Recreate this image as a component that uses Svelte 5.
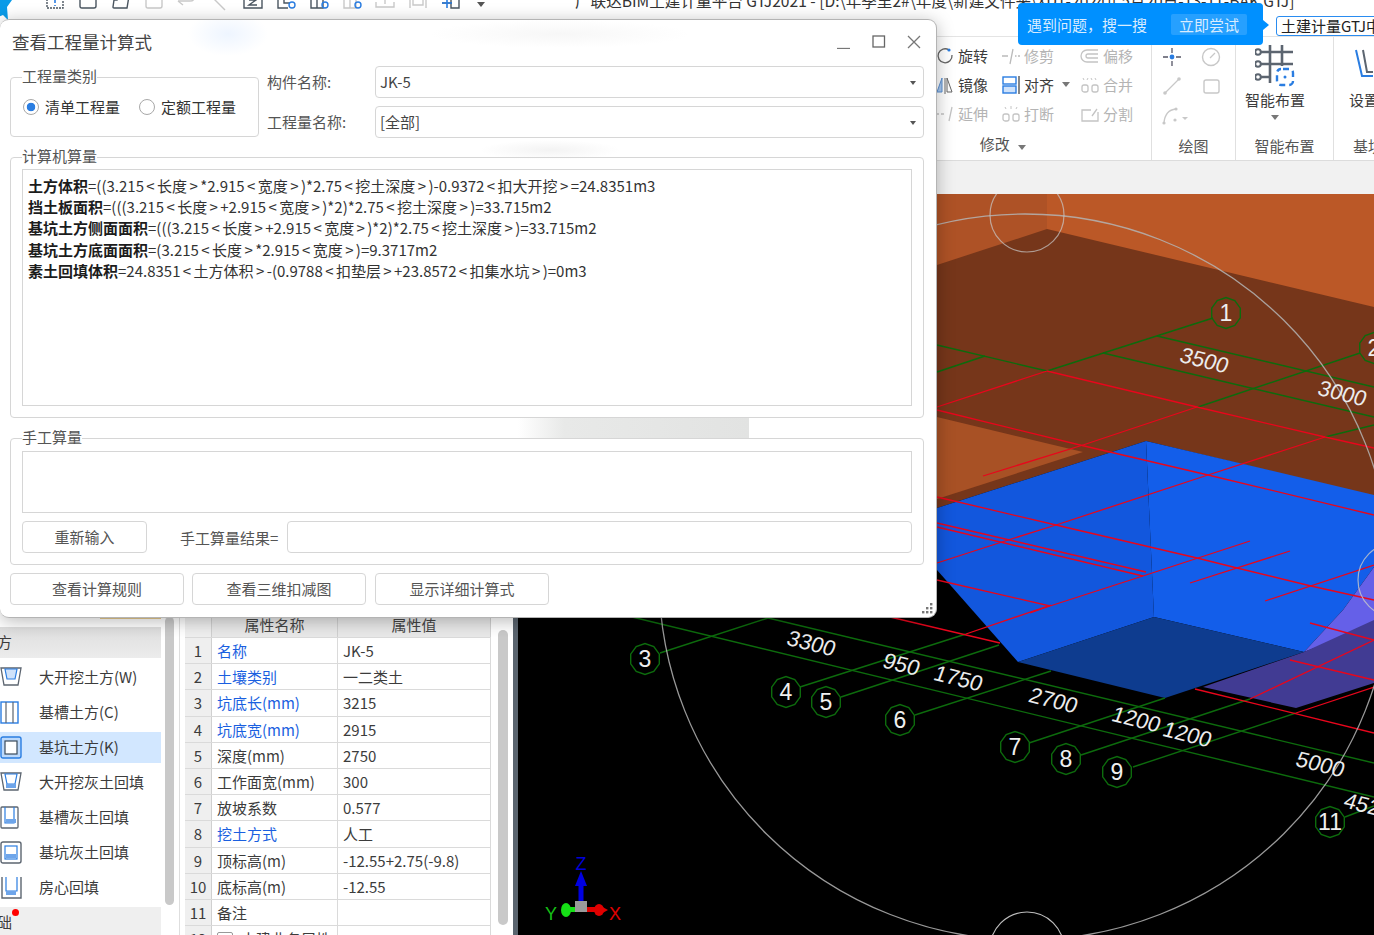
<script>
	const quick = [
		{ c: '#4a5560', d: 'M2 -4h16v12h-16z', dash: true, extra: 'M10 -2v5M10 5v1' },
		{ c: '#4a5560', d: 'M2 -4h16v10q0 2-2 2h-12q-2 0-2-2z' },
		{ c: '#4a5560', d: 'M6 -4h12l-2 12h-13q-1 0-1-1l1-7h3z' },
		{ c: '#c9c9c9', d: 'M2 -4h16v10q0 2-2 2h-12q-2 0-2-2z' },
		{ c: '#c9c9c9', d: 'M1 1h12q5 0 4-5M1 1l5 4' },
		{ c: '#c9c9c9', d: 'M3 -2l12 12' },
		{ c: '#4a5560', d: 'M1 -4h18v12h-18zM6 0h7l-7 5h8' },
		{ c: '#4a5560', d: 'M2 -4v12h10M8 -4v7h6', blue: true },
		{ c: '#4a5560', d: 'M2 -4h12v12h-12zM8 -4v12', blue: true },
		{ c: '#c9c9c9', d: 'M2 -4h12v12h-12zM8 -4v12', blue: true },
		{ c: '#c9c9c9', d: 'M1 2v5h18v-5M10 4v-8' },
		{ c: '#c9c9c9', d: 'M2 -4v12M18 -4v12M5 -4h10v9h-10z' },
		{ c: '#4a5560', d: 'M10 -4v12h8v-12M1 3h10', plus: true }
	];

	const listItems = [
		{ name: '大开挖土方(W)', kind: 'w' },
		{ name: '基槽土方(C)', kind: 'c' },
		{ name: '基坑土方(K)', kind: 'k', active: true },
		{ name: '大开挖灰土回填', kind: 'w', fill: true },
		{ name: '基槽灰土回填', kind: 'c2', fill: true },
		{ name: '基坑灰土回填', kind: 'k', fill: true },
		{ name: '房心回填', kind: 'u', fill: true }
	];

	const props = [
		['名称', 'JK-5', true],
		['土壤类别', '一二类土', true],
		['坑底长(mm)', '3215', true],
		['坑底宽(mm)', '2915', true],
		['深度(mm)', '2750', false],
		['工作面宽(mm)', '300', false],
		['放坡系数', '0.577', false],
		['挖土方式', '人工', true],
		['顶标高(m)', '-12.55+2.75(-9.8)', false],
		['底标高(m)', '-12.55', false],
		['备注', '', false]
	];

	const formulas = [
		['土方体积', '=((3.215<长度>*2.915<宽度>)*2.75<挖土深度>)-0.9372<扣大开挖>=24.8351m3'],
		['挡土板面积', '=(((3.215<长度>+2.915<宽度>)*2)*2.75<挖土深度>)=33.715m2'],
		['基坑土方侧面面积', '=(((3.215<长度>+2.915<宽度>)*2)*2.75<挖土深度>)=33.715m2'],
		['基坑土方底面面积', '=(3.215<长度>*2.915<宽度>)=9.3717m2'],
		['素土回填体积', '=24.8351<土方体积>-(0.9788<扣垫层>+23.8572<扣集水坑>)=0m3']
	];

	// axis bubbles on the 3d canvas
	const bubbles = [
		{ t: '1', x: 1226, y: 313 },
		{ t: '2', x: 1374, y: 348 },
		{ t: '3', x: 645, y: 659 },
		{ t: '4', x: 786, y: 692 },
		{ t: '5', x: 826, y: 702 },
		{ t: '6', x: 900, y: 720 },
		{ t: '7', x: 1015, y: 747 },
		{ t: '8', x: 1066, y: 759 },
		{ t: '9', x: 1117, y: 772 },
		{ t: '11', x: 1330, y: 822 }
	];

	const dims = [
		{ t: '3500', x: 1204, y: 362 },
		{ t: '3000', x: 1342, y: 395 },
		{ t: '3300', x: 811, y: 645 },
		{ t: '950', x: 901, y: 666 },
		{ t: '1750', x: 958, y: 680 },
		{ t: '2700', x: 1053, y: 702 },
		{ t: '1200', x: 1136, y: 721 },
		{ t: '1200', x: 1187, y: 736 },
		{ t: '5000', x: 1320, y: 766 },
		{ t: '452', x: 1362, y: 806 }
	];

	const greenLines = [
		'1213,318 1047,371',
		'1360,353 1198,407',
		'1374,425 1325,437',
		'937,345 1047,371',
		'937,372 985,356',
		'1157,336 1374,387',
		'1103,353 1374,417',
		'632,617 1374,797',
		'768,618 1374,763',
		'660,653 768,618',
		'800,687 966,634',
		'841,697 999,645',
		'915,715 1051,671',
		'1029,743 1165,698',
		'1081,755 1250,699',
		'1133,767 1296,713',
		'1345,817 1374,806'
	];

	const redLines = [
		'1047,371 1197,407 1325,437 1374,448',
		'937,407 1047,371',
		'937,410 1080,445 1208,475 1374,515',
		'1197,407 1083,445 983,476',
		'1325,437 1208,475 1056,525 1005,541 937,563',
		'937,497 1056,525 1197,558 1237,568 1311,586 1374,600',
		'937,523 1146,572',
		'937,527 1143,576',
		'1250,541 1146,575 1050,606 1030,613',
		'1290,551 1190,583',
		'1374,565 1265,601',
		'937,580 1050,606',
		'890,617 1000,643',
		'966,634 1051,605',
		'1195,689 1374,733',
		'1296,713 1374,687',
		'1250,699 1374,640',
		'1310,623 1374,640',
		'1290,660 1374,680'
	];

	function ring(x, y) {
		let pts = [];
		for (let i = 0; i < 10; i++) {
			const a = (Math.PI * 2 * i) / 10 + Math.PI / 10;
			pts.push((x + Math.cos(a) * 15).toFixed(1) + ',' + (y + Math.sin(a) * 15.5).toFixed(1));
		}
		return pts.join(' ');
	}

	// the angle brackets sit wider apart in the formulas
	function pieces(s) {
		return s.split(/([<>])/).filter(Boolean);
	}
</script>

<div class="app">
	<header class="topbar">
		<svg class="logo" width="12" height="22" viewBox="0 0 12 22"><path d="M-4 0h16l-5 7 1 13-5-5-7 3z" fill="#0a9be8" /></svg>
		<div class="quick">
			{#each quick as q}
				<svg width="20" height="10" viewBox="0 0 20 10">
					<path d={q.d} fill="none" stroke={q.c} stroke-width="1.4" stroke-dasharray={q.dash ? '2 1' : 'none'} />
					{#if q.extra}<path d={q.extra} stroke="#2a7de1" stroke-width="1.6" />{/if}
					{#if q.blue}<circle cx="16" cy="5" r="3" fill="none" stroke="#2a7de1" stroke-width="1.4" />{/if}
					{#if q.plus}<path d="M1 3h10M6 -2v10" stroke="#2a7de1" stroke-width="1.6" />{/if}
				</svg>
			{/each}
			<span class="qarrow"></span>
		</div>
		<div class="wintitle">广联达BIM土建计量平台 GTJ2021 - [D:\年季里2#\年度\新建文件夹\XD1-2024年5月20日-13-11-BAK.GTJ]</div>
		<div class="search">土建计量GTJ中</div>
	</header>

	<section class="ribbon">
		<div class="group modify">
			<div class="tools">
				<div class="tool">
					<svg viewBox="0 0 20 20"><path d="M14 4a7 7 0 1 0 3 5" fill="none" stroke="#666" stroke-width="1.3" /><circle cx="14" cy="4" r="1.6" fill="#2a7de1" /></svg>
					<span>旋转</span>
				</div>
				<div class="tool off">
					<svg viewBox="0 0 20 20"><path d="M1 10h6M14 10h1.5M17 10h2M12 3l-3 15" stroke="#bbb" stroke-width="1.3" fill="none" /></svg>
					<span>修剪</span>
				</div>
				<div class="tool off">
					<svg viewBox="0 0 20 20"><path d="M18 4h-11a6 6 0 0 0 0 12h11M18 8h-10a2 2 0 0 0 0 4h10" fill="none" stroke="#c4c4c4" stroke-width="1.3" /></svg>
					<span>偏移</span>
				</div>
				<div class="tool">
					<svg viewBox="0 0 20 20"><path d="M7 3l-5 14h5z" fill="#a6c8f0" stroke="#5b8fd0" /><path d="M10 3v16" stroke="#666" /><path d="M12 3l5 14h-5z" fill="none" stroke="#666" /></svg>
					<span>镜像</span>
				</div>
				<div class="tool">
					<svg viewBox="0 0 20 20"><rect x="2" y="2" width="13" height="7" fill="none" stroke="#2a7de1" stroke-width="1.4" /><rect x="2" y="11" width="13" height="7" fill="#cfe2fa" stroke="#2a7de1" stroke-width="1.4" /><path d="M18 1v18" stroke="#555" stroke-width="1.4" /></svg>
					<span>对齐</span>
					<i class="caret"></i>
				</div>
				<div class="tool off">
					<svg viewBox="0 0 20 20"><path d="M3 3l1 2M15 3l1 2M8 3l-1 2M11 3l1 2" stroke="#c4c4c4" /><rect x="2" y="10" width="6" height="7" rx="2" fill="none" stroke="#c4c4c4" stroke-width="1.3" /><rect x="12" y="10" width="6" height="7" rx="2" fill="none" stroke="#c4c4c4" stroke-width="1.3" /></svg>
					<span>合并</span>
				</div>
				<div class="tool off">
					<svg viewBox="0 0 20 20"><path d="M1 10h3M6 10h3M17 3l-3 14" stroke="#c4c4c4" stroke-width="1.3" /></svg>
					<span>延伸</span>
				</div>
				<div class="tool off">
					<svg viewBox="0 0 20 20"><path d="M4 3l1 2M16 3l-1 2M10 2v3" stroke="#c4c4c4" /><rect x="2" y="10" width="6" height="7" rx="2" fill="none" stroke="#c4c4c4" stroke-width="1.3" /><rect x="12" y="10" width="6" height="7" rx="2" fill="none" stroke="#c4c4c4" stroke-width="1.3" /></svg>
					<span>打断</span>
				</div>
				<div class="tool off">
					<svg viewBox="0 0 20 20"><path d="M18 8v9h-16v-11h9M12 12l5-7" fill="none" stroke="#c4c4c4" stroke-width="1.3" /></svg>
					<span>分割</span>
				</div>
			</div>
			<div class="grouplabel">修改 <i class="caret"></i></div>
		</div>

		<div class="group draw">
			<div class="drawgrid">
				<svg viewBox="0 0 20 20"><path d="M1 10h5M14 10h5M10 1v5M10 14v5" stroke="#556" stroke-width="1.3" /><circle cx="10" cy="10" r="2.4" fill="#2a7de1" /></svg>
				<svg viewBox="0 0 20 20"><circle cx="10" cy="10" r="8.5" fill="none" stroke="#c8c8c8" stroke-width="1.4" /><path d="M9 11l5-5" stroke="#c8c8c8" stroke-width="1.3" /></svg>
				<svg viewBox="0 0 20 20"><path d="M3 17l14-14" stroke="#c8c8c8" stroke-width="1.3" /><circle cx="3" cy="17" r="1.8" fill="#c8c8c8" /><circle cx="17" cy="3" r="1.8" fill="#c8c8c8" /></svg>
				<svg viewBox="0 0 20 20"><rect x="3" y="4" width="15" height="13" rx="2" fill="none" stroke="#c8c8c8" stroke-width="1.4" /></svg>
				<svg viewBox="0 0 20 20"><path d="M2 18q1-13 12-14" fill="none" stroke="#c8c8c8" stroke-width="1.3" /><circle cx="2" cy="18" r="1.6" fill="#c8c8c8" /><circle cx="14" cy="4" r="1.6" fill="#c8c8c8" /><circle cx="13" cy="15" r="1.6" fill="#c8c8c8" /><path d="M20 12h6l-3 3z" fill="#c8c8c8" /></svg>
			</div>
			<div class="grouplabel low">绘图</div>
		</div>

		<div class="group smart">
			<div class="bigbtn">
				<svg width="40" height="42" viewBox="0 0 40 42">
					<path d="M3 7h35M3 19h35M3 32h13M15 0v38M27 0v21" stroke="#5c6570" stroke-width="2.6" fill="none" />
					<circle cx="3" cy="7" r="2.8" fill="#fff" stroke="#5c6570" stroke-width="2" />
					<circle cx="3" cy="19" r="2.8" fill="#fff" stroke="#5c6570" stroke-width="2" />
					<circle cx="3" cy="32" r="2.8" fill="#fff" stroke="#5c6570" stroke-width="2" />
					<rect x="22" y="24" width="16" height="16" rx="4" fill="#fff" stroke="#2a7de1" stroke-width="2.4" stroke-dasharray="6 4" stroke-dashoffset="-2" />
					<circle cx="30" cy="32" r="1.5" fill="#2a7de1" />
				</svg>
				<span>智能布置</span>
				<i class="caret"></i>
			</div>
			<div class="grouplabel low">智能布置</div>
		</div>

		<div class="group pit">
			<div class="bigbtn left">
				<svg width="24" height="42" viewBox="0 0 24 42"><path d="M14 5l4 22h8" fill="none" stroke="#5c6570" stroke-width="2" /><path d="M7 5l6 26h12" fill="none" stroke="#2a7de1" stroke-width="2" /></svg>
				<span>设置</span>
			</div>
			<div class="grouplabel low">基坑</div>
		</div>
	</section>

	<div class="subbar"></div>

	<main class="main">
		<aside class="side">
			<div class="tabstrip"></div>
			<div class="section">方</div>
			<div class="items">
				{#each listItems as it}
					<div class="item" class:active={it.active}>
						<svg width="24" height="24" viewBox="0 0 24 24">
							{#if it.kind === 'w'}
								<path d="M1 2h20l-3 17h-14z" fill="#fff" stroke="#5c6570" stroke-width="1.3" />
								<path d="M5 3h12l-2 10h-8z" fill={it.fill ? '#fff' : '#cfe2fa'} stroke="#2a7de1" stroke-width="1.2" />
							{:else if it.kind === 'c'}
								<rect x="1" y="1" width="17" height="21" fill="#fff" stroke="#2a7de1" stroke-width="1.4" />
								<path d="M6 1v21M13 1v21" stroke="#5c6570" stroke-width="1.2" />
							{:else if it.kind === 'c2'}
								<rect x="1" y="1" width="17" height="21" rx="1" fill="#fff" stroke="#5c6570" stroke-width="1.3" />
								<path d="M5 1v16h9v-16" fill="none" stroke="#2a7de1" stroke-width="1.2" />
							{:else if it.kind === 'k'}
								<rect x="1" y="1" width="20" height="21" rx="2" fill={it.active ? '#bcd9fb' : '#fff'} stroke={it.active ? '#2a7de1' : '#5c6570'} stroke-width="1.4" />
								<rect x="5" y="5" width="12" height="13" fill="#fff" stroke={it.active ? '#3a4a5a' : '#2a7de1'} stroke-width="1.2" />
							{:else}
								<path d="M2 1v21h19v-21" fill="#fff" stroke="#5c6570" stroke-width="1.4" />
								<path d="M6 1v14h11v-14" fill="none" stroke="#2a7de1" stroke-width="1.2" />
							{/if}
							{#if it.fill}
								<rect x="6" y={it.kind === 'u' ? 15 : 13} width="10" height="4" fill="#6ea5ea" />
							{/if}
						</svg>
						<span>{it.name}</span>
					</div>
				{/each}
			</div>
			<div class="section lower">础<b class="dot"></b></div>
		</aside>

		<div class="bar1"><div class="thumb"></div></div>

		<div class="props">
			<div class="head">
				<div class="num"></div>
				<div>属性名称</div>
				<div>属性值</div>
			</div>
			{#each props as p, i}
				<div class="row">
					<div class="num">{i + 1}</div>
					<div class="name" class:link={p[2]}>{p[0]}</div>
					<div class="val">{p[1]}</div>
				</div>
			{/each}
			<div class="row">
				<div class="num">12</div>
				<div class="name"><span class="expand"></span>土建业务属性</div>
				<div class="val"></div>
			</div>
		</div>

		<div class="bar2"><div class="thumb"></div></div>
		<div class="sash"></div>

		<svg class="canvas" viewBox="518 194 856 741" width="856" height="741">
			<rect x="518" y="194" width="856" height="741" fill="#000" />
			<rect x="937" y="194" width="437" height="160" fill="#bb5827" />
			<rect x="937" y="194" width="110" height="80" fill="#ae5226" />
			<polygon points="1047,229 1374,307 1374,496 1146,441 937,508 937,265" fill="#76361a" />
			<polygon points="937,417 1083,452 937,499" fill="#a85125" />
			<polygon points="937,508 1146,441 1154,617 1018,662 937,570" fill="#1257dd" />
			<polygon points="1146,441 1374,495 1374,567 1343,610 1304,652 1154,617" fill="#135eea" />
			<polygon points="1018,662 1154,617 1304,652 1165,698" fill="#0e3c8f" />
			<polygon points="1343,610 1374,567 1374,625 1304,652" fill="#6560e8" />
			<polygon points="1203,687 1304,652 1374,620 1374,683 1296,708" fill="#413b93" />

			{#each greenLines as l}
				<polyline points={l} fill="none" stroke="#0d6b0d" stroke-width="1.4" />
			{/each}
			{#each redLines as l}
				<polyline points={l} fill="none" stroke="#e8061c" stroke-width="1.3" />
			{/each}

			<ellipse cx="1025" cy="577" rx="366" ry="363" fill="none" stroke="#b4b4b4" stroke-width="1.3" opacity="0.85" />
			<circle cx="1027" cy="215" r="37" fill="none" stroke="#c8c8c8" stroke-width="1.2" opacity="0.7" />
			<circle cx="1027" cy="949" r="37" fill="none" stroke="#bdbdbd" stroke-width="1.2" />
			<circle cx="1395" cy="580" r="37" fill="none" stroke="#c8c8c8" stroke-width="1.2" opacity="0.8" />
			<circle cx="661" cy="580" r="37" fill="none" stroke="#bdbdbd" stroke-width="1.2" />

			{#each bubbles as b}
				<polygon points={ring(b.x, b.y)} fill="none" stroke="#0d6b0d" stroke-width="1.4" />
				<text x={b.x} y={b.y + 8} class="bubble">{b.t}</text>
			{/each}
			{#each dims as d}
				<text class="dim" transform="translate({d.x} {d.y}) rotate(14) skewX(-6)">{d.t}</text>
			{/each}

			<text x="581" y="870" class="axis" fill="#0000d8">Z</text>
			<polygon points="581,871 575,886 587,886" fill="#0000e0" />
			<rect x="578.5" y="885" width="5" height="20" fill="#0000e0" />
			<ellipse cx="566" cy="910" rx="5" ry="7" fill="#16e016" />
			<rect x="566" y="907" width="14" height="5" fill="#16e016" />
			<ellipse cx="599" cy="910" rx="5" ry="6" fill="#e00000" />
			<polygon points="608,910 599,905 599,915" fill="#e00000" />
			<rect x="582" y="907" width="16" height="5" fill="#e00000" />
			<rect x="575" y="901" width="12" height="11" fill="#9a9a9a" />
			<text x="551" y="920" class="axis" fill="#16c016">Y</text>
			<text x="615" y="920" class="axis" fill="#e00000">X</text>
		</svg>
	</main>

	<div class="tip">
		<span>遇到问题，搜一搜</span>
		<span class="try">立即尝试</span>
	</div>

	<div class="dialog">
		<div class="smear"></div>
		<div class="dtitle">
			<span>查看工程量计算式</span>
			<div class="winbtns">
				<svg width="14" height="14" viewBox="0 0 14 14"><path d="M0 13.5h13" stroke="#777" stroke-width="1.3" /></svg>
				<svg width="14" height="14" viewBox="0 0 14 14"><rect x="1" y="1" width="11.5" height="11" fill="none" stroke="#666" stroke-width="1.3" /></svg>
				<svg width="14" height="14" viewBox="0 0 14 14"><path d="M1 1l12 12M13 1l-12 12" stroke="#777" stroke-width="1.3" /></svg>
			</div>
		</div>

		<div class="toprow">
			<fieldset class="kind">
				<legend>工程量类别</legend>
				<div class="radios">
					<label><i class="radio on"></i>清单工程量</label>
					<label><i class="radio"></i>定额工程量</label>
				</div>
			</fieldset>
			<div class="fields">
				<div class="field">
					<span class="flabel">构件名称:</span>
					<div class="select">JK-5<i class="sarrow"></i></div>
				</div>
				<div class="field">
					<span class="flabel">工程量名称:</span>
					<div class="select">[全部]<i class="sarrow"></i></div>
				</div>
			</div>
		</div>

		<fieldset class="calc">
			<legend>计算机算量</legend>
			<div class="formulas">
				{#each formulas as f}
					<div><b>{f[0]}</b>{#each pieces(f[1]) as part}{#if part === '<' || part === '>'}<span class="br">{part}</span>{:else}{part}{/if}{/each}</div>
				{/each}
			</div>
		</fieldset>

		<fieldset class="manual">
			<legend>手工算量</legend>
			<div class="manualbox"></div>
			<div class="manualrow">
				<button class="btn retype">重新输入</button>
				<span class="mlabel">手工算量结果=</span>
				<div class="minput"></div>
			</div>
		</fieldset>

		<div class="actions">
			<button class="btn">查看计算规则</button>
			<button class="btn">查看三维扣减图</button>
			<button class="btn">显示详细计算式</button>
		</div>

		<svg class="grip" width="11" height="11" viewBox="0 0 11 11" fill="#777">
			<rect x="8" y="0" width="2.4" height="2.4" /><rect x="4" y="4" width="2.4" height="2.4" /><rect x="8" y="4" width="2.4" height="2.4" />
			<rect x="0" y="8" width="2.4" height="2.4" /><rect x="4" y="8" width="2.4" height="2.4" /><rect x="8" y="8" width="2.4" height="2.4" />
		</svg>
	</div>
</div>

<style>
	:global(body) {
		margin: 0;
		background: #fff;
	}

	.app {
		position: relative;
		width: 1374px;
		height: 935px;
		overflow: hidden;
		background: #fff;
		color: #3c3c3c;
		font-family: "Noto Sans CJK SC", "Noto Sans", sans-serif;
		font-size: 15px;
	}

	/* top bar */
	.topbar {
		display: flex;
		height: 37px;
		box-sizing: border-box;
		border-bottom: 1px solid #e4e4e4;
		overflow: hidden;
	}
	.logo {
		flex: none;
	}
	.quick {
		display: flex;
		gap: 13px;
		margin-left: 33px;
		flex: none;
		width: 452px;
		height: 10px;
		align-items: flex-start;
	}
	.quick svg {
		overflow: visible;
		flex: none;
	}
	.qarrow {
		width: 0;
		height: 0;
		margin: 2px 0 0 3px;
		border: 4px solid transparent;
		border-top: 5px solid #555;
	}
	.wintitle {
		flex: none;
		width: 720px;
		margin: -11px 0 0 78px;
		white-space: nowrap;
		font-size: 15.6px;
		line-height: 22px;
		color: #333;
	}
	.search {
		flex: none;
		width: 110px;
		height: 20px;
		margin: 16px 0 0 -19px;
		box-sizing: border-box;
		padding-left: 4px;
		background: #fff;
		border: 1.5px solid #2a8cf0;
		border-radius: 3px;
		line-height: 18px;
		color: #222;
		white-space: nowrap;
	}

	/* ribbon */
	.ribbon {
		display: flex;
		height: 124px;
		padding-left: 935px;
		box-sizing: border-box;
		border-bottom: 1px solid #dcdcdc;
	}
	.group {
		box-sizing: border-box;
		flex: none;
		border-right: 1px solid #e0e0e0;
		display: flex;
		flex-direction: column;
	}
	.modify {
		width: 217px;
	}
	.tools {
		display: grid;
		grid-template-columns: 66px 79px 71px;
		grid-auto-rows: 29px;
		margin-top: 4px;
	}
	.tool {
		display: flex;
		align-items: center;
		gap: 3px;
		white-space: nowrap;
		color: #3c3c3c;
	}
	.tool svg {
		width: 20px;
		height: 20px;
		flex: none;
	}
	.tool.off {
		color: #b4b4b4;
	}
	.caret {
		display: inline-block;
		width: 0;
		height: 0;
		border: 4px solid transparent;
		border-top: 5px solid #777;
		border-bottom: 0;
		margin-left: 5px;
	}
	.grouplabel {
		margin-top: 5px;
		text-align: center;
		padding-right: 80px;
		color: #555;
	}
	.low {
		margin-top: auto;
		margin-bottom: 4px;
		padding-right: 0;
		white-space: nowrap;
	}
	.draw {
		width: 84px;
	}
	.drawgrid {
		display: grid;
		grid-template-columns: 20px 20px;
		grid-auto-rows: 29px;
		column-gap: 19px;
		margin: 5px 0 0 10px;
		align-items: center;
	}
	.drawgrid svg {
		width: 20px;
		height: 20px;
		overflow: visible;
	}
	.smart {
		width: 98px;
	}
	.bigbtn {
		display: flex;
		flex-direction: column;
		align-items: center;
		width: 78px;
		margin-top: 8px;
	}
	.bigbtn span {
		margin-top: 2px;
		white-space: nowrap;
	}
	.bigbtn .caret {
		margin: 5px 0 0;
	}
	.bigbtn.left {
		align-items: flex-start;
		padding-left: 15px;
		width: auto;
	}
	.pit {
		width: 60px;
		border-right: 0;
	}
	.pit .low {
		text-align: left;
		padding-left: 19px;
	}

	.subbar {
		height: 33px;
		background: #f1f1f1;
	}

	/* left panels */
	.main {
		display: flex;
		height: 741px;
		overflow: hidden;
	}
	.side {
		flex: none;
		width: 161px;
		padding-top: 419px;
		background: #fff;
	}
	.tabstrip {
		height: 6px;
		margin: 0 0 8px 100px;
		background: #e6c98c;
	}
	.section {
		height: 31px;
		line-height: 30px;
		margin-left: 0;
		text-indent: -3px;
		overflow: hidden;
		position: relative;
		background: linear-gradient(#dedede, #ececec);
	}
	.section.lower {
		background: #efefef;
	}
	.dot {
		position: absolute;
		left: 12px;
		top: 2px;
		width: 7px;
		height: 7px;
		border-radius: 50%;
		background: #f00;
	}
	.items {
		display: flex;
		flex-direction: column;
		gap: 4px;
		padding: 4px 0;
	}
	.item {
		display: flex;
		align-items: center;
		height: 31px;
		gap: 15px;
		white-space: nowrap;
	}
	.item span {
		margin-bottom: 2px;
	}
	.item.active {
		background: #d2e7ff;
	}
	.bar1 {
		flex: none;
		width: 18px;
		box-sizing: border-box;
		padding: 423px 0 0 4px;
	}
	.bar1 .thumb {
		width: 9px;
		height: 288px;
		border-radius: 5px;
		background: #c9c9c9;
	}
	.props {
		flex: none;
		width: 312px;
		box-sizing: border-box;
		padding: 419px 0 0 5px;
		border-left: 1px solid #dedede;
		font-size: 15px;
	}
	.head,
	.row {
		display: grid;
		grid-template-columns: 27px 126px 153px;
		box-sizing: border-box;
		border-bottom: 1px solid #dadada;
	}
	.head {
		height: 25px;
		text-align: center;
		line-height: 23px;
		background: #e9e9e9;
		color: #444;
	}
	.head > div {
		border-right: 1px solid #d0d0d0;
	}
	.row {
		height: 26.2px;
		line-height: 25px;
		white-space: nowrap;
		overflow: hidden;
	}
	.num {
		background: #efefef;
		text-align: center;
		border-right: 1px solid #d0d0d0;
	}
	.name {
		padding-left: 5px;
		border-right: 1px solid #dadada;
	}
	.val {
		padding-left: 5px;
		border-right: 1px solid #dadada;
	}
	.link {
		color: #1a5fe0;
	}
	.expand {
		display: inline-block;
		width: 14px;
		height: 12px;
		margin-right: 8px;
		border: 1px solid #999;
		border-radius: 2px;
		vertical-align: -1px;
	}
	.bar2 {
		flex: none;
		width: 22px;
		box-sizing: border-box;
		padding: 436px 0 0 7px;
	}
	.bar2 .thumb {
		width: 10px;
		height: 295px;
		border-radius: 5px;
		background: #c9c9c9;
	}
	.sash {
		flex: none;
		width: 5px;
		background: #5a646e;
	}
	.canvas {
		flex: none;
		display: block;
	}
	.bubble {
		font-family: "Liberation Sans", sans-serif;
		font-size: 23px;
		fill: #f0f0f0;
		text-anchor: middle;
	}
	.dim {
		font-family: "Liberation Sans", sans-serif;
		font-size: 22px;
		fill: #ececec;
		text-anchor: middle;
		dominant-baseline: middle;
	}
	.axis {
		font-family: "Liberation Sans", sans-serif;
		font-size: 18px;
		text-anchor: middle;
	}

	/* tip over the ribbon */
	.tip {
		position: absolute;
		left: 1018px;
		top: 3px;
		width: 245px;
		height: 42px;
		box-sizing: border-box;
		padding-left: 9px;
		display: flex;
		align-items: center;
		justify-content: flex-start;
		gap: 24px;
		background: #0090ff;
		border-radius: 4px;
		color: #d8ecff;
		white-space: nowrap;
	}
	.tip::after {
		content: "";
		position: absolute;
		left: 100%;
		top: 17px;
		border: 5px solid transparent;
		border-left: 6px solid #0090ff;
	}
	.try {
		padding: 0 8px;
		height: 21px;
		line-height: 21px;
		border-radius: 2px;
		background: rgba(255, 255, 255, 0.15);
	}

	/* dialog */
	.dialog {
		position: absolute;
		left: 0;
		top: 19px;
		width: 937px;
		height: 599px;
		box-sizing: border-box;
		padding: 0 12px 0 10px;
		background:
			radial-gradient(ellipse 40px 22px at 228px 14px, #eef5ff, transparent),
			radial-gradient(ellipse 130px 14px at 560px 14px, #f7f7f7, transparent),
			radial-gradient(ellipse 70px 10px at 550px 130px, #f3f3f3, transparent),
			#fff;
		border: 1px solid #b4b4b4;
		border-left: 0;
		border-radius: 9px;
		box-shadow: 0 3px 18px rgba(0, 0, 0, 0.28);
		font-size: 15px;
	}
	.smear {
		position: absolute;
		left: 518px;
		top: 398px;
		width: 231px;
		height: 20px;
		background: linear-gradient(90deg, transparent, #e8e9e8 20%, #e2e3e2);
	}
	.dtitle {
		display: flex;
		align-items: center;
		box-sizing: border-box;
		height: 46px;
		padding: 0 0 4px 2px;
		font-size: 17.5px;
		color: #444;
	}
	.winbtns {
		display: flex;
		gap: 21px;
		margin-left: auto;
		margin-right: 3px;
		margin-top: 1px;
	}
	fieldset {
		margin: 0;
		min-width: 0;
		box-sizing: border-box;
		padding: 0 11px;
		border: 1px solid #d6d6d6;
		border-radius: 4px;
	}
	legend {
		padding: 0;
		line-height: 20px;
		color: #555;
		position: relative;
		top: -1px;
	}
	.toprow {
		display: flex;
		height: 71px;
	}
	.kind {
		width: 249px;
		height: 70px;
		margin-top: 1px;
		flex: none;
	}
	.radios {
		display: flex;
		gap: 19px;
		margin-top: 9px;
		margin-left: 1px;
		white-space: nowrap;
		color: #333;
	}
	.radios label {
		display: flex;
		align-items: center;
		gap: 6px;
	}
	.radio {
		box-sizing: border-box;
		width: 16px;
		height: 16px;
		border: 1.3px solid #a8a8a8;
		border-radius: 50%;
		background: #fff;
	}
	.radio.on {
		background: radial-gradient(circle, #2a7de1 0 4px, #fff 4.6px);
	}
	.fields {
		flex: 1;
		display: flex;
		flex-direction: column;
		gap: 9px;
		margin-left: 8px;
	}
	.field {
		display: flex;
		align-items: center;
		height: 31px;
	}
	.flabel {
		width: 108px;
		flex: none;
		color: #555;
	}
	.select {
		flex: 1;
		position: relative;
		box-sizing: border-box;
		height: 32px;
		line-height: 30px;
		padding-left: 4px;
		border: 1px solid #d6d6d6;
		border-radius: 4px;
		color: #444;
	}
	.sarrow {
		position: absolute;
		right: 7px;
		top: 14px;
		border: 3px solid transparent;
		border-top: 4px solid #555;
		border-bottom: 0;
	}
	.calc {
		height: 271px;
		margin-top: 10px;
	}
	.formulas {
		box-sizing: border-box;
		height: 237px;
		margin-top: 2px;
		padding: 5px 5px;
		border: 1px solid #d6d6d6;
		line-height: 21.2px;
		color: #333;
		white-space: nowrap;
	}
	.formulas b {
		font-weight: 700;
		color: #1c1c1c;
	}
	.br {
		margin: 0 2.4px;
	}
	.manual {
		height: 137px;
		margin-top: 10px;
	}
	.manualbox {
		height: 62px;
		box-sizing: border-box;
		margin-top: 3px;
		border: 1px solid #d6d6d6;
	}
	.manualrow {
		display: flex;
		align-items: center;
		margin-top: 8px;
	}
	.btn {
		box-sizing: border-box;
		height: 32px;
		padding: 0 0 2px;
		background: #fff;
		border: 1px solid #d6d6d6;
		border-radius: 4px;
		font: inherit;
		color: #555;
	}
	.retype {
		flex: none;
		width: 125px;
	}
	.mlabel {
		flex: none;
		margin-left: 33px;
		width: 107px;
		white-space: nowrap;
		color: #555;
	}
	.minput {
		flex: 1;
		height: 32px;
		box-sizing: border-box;
		border: 1px solid #d6d6d6;
		border-radius: 4px;
	}
	.actions {
		display: flex;
		gap: 8px;
		margin-top: 8px;
	}
	.actions .btn {
		width: 174px;
	}
	.actions .btn:last-child {
		margin-left: 1px;
	}
	.grip {
		position: absolute;
		right: 3px;
		bottom: 3px;
	}
</style>
